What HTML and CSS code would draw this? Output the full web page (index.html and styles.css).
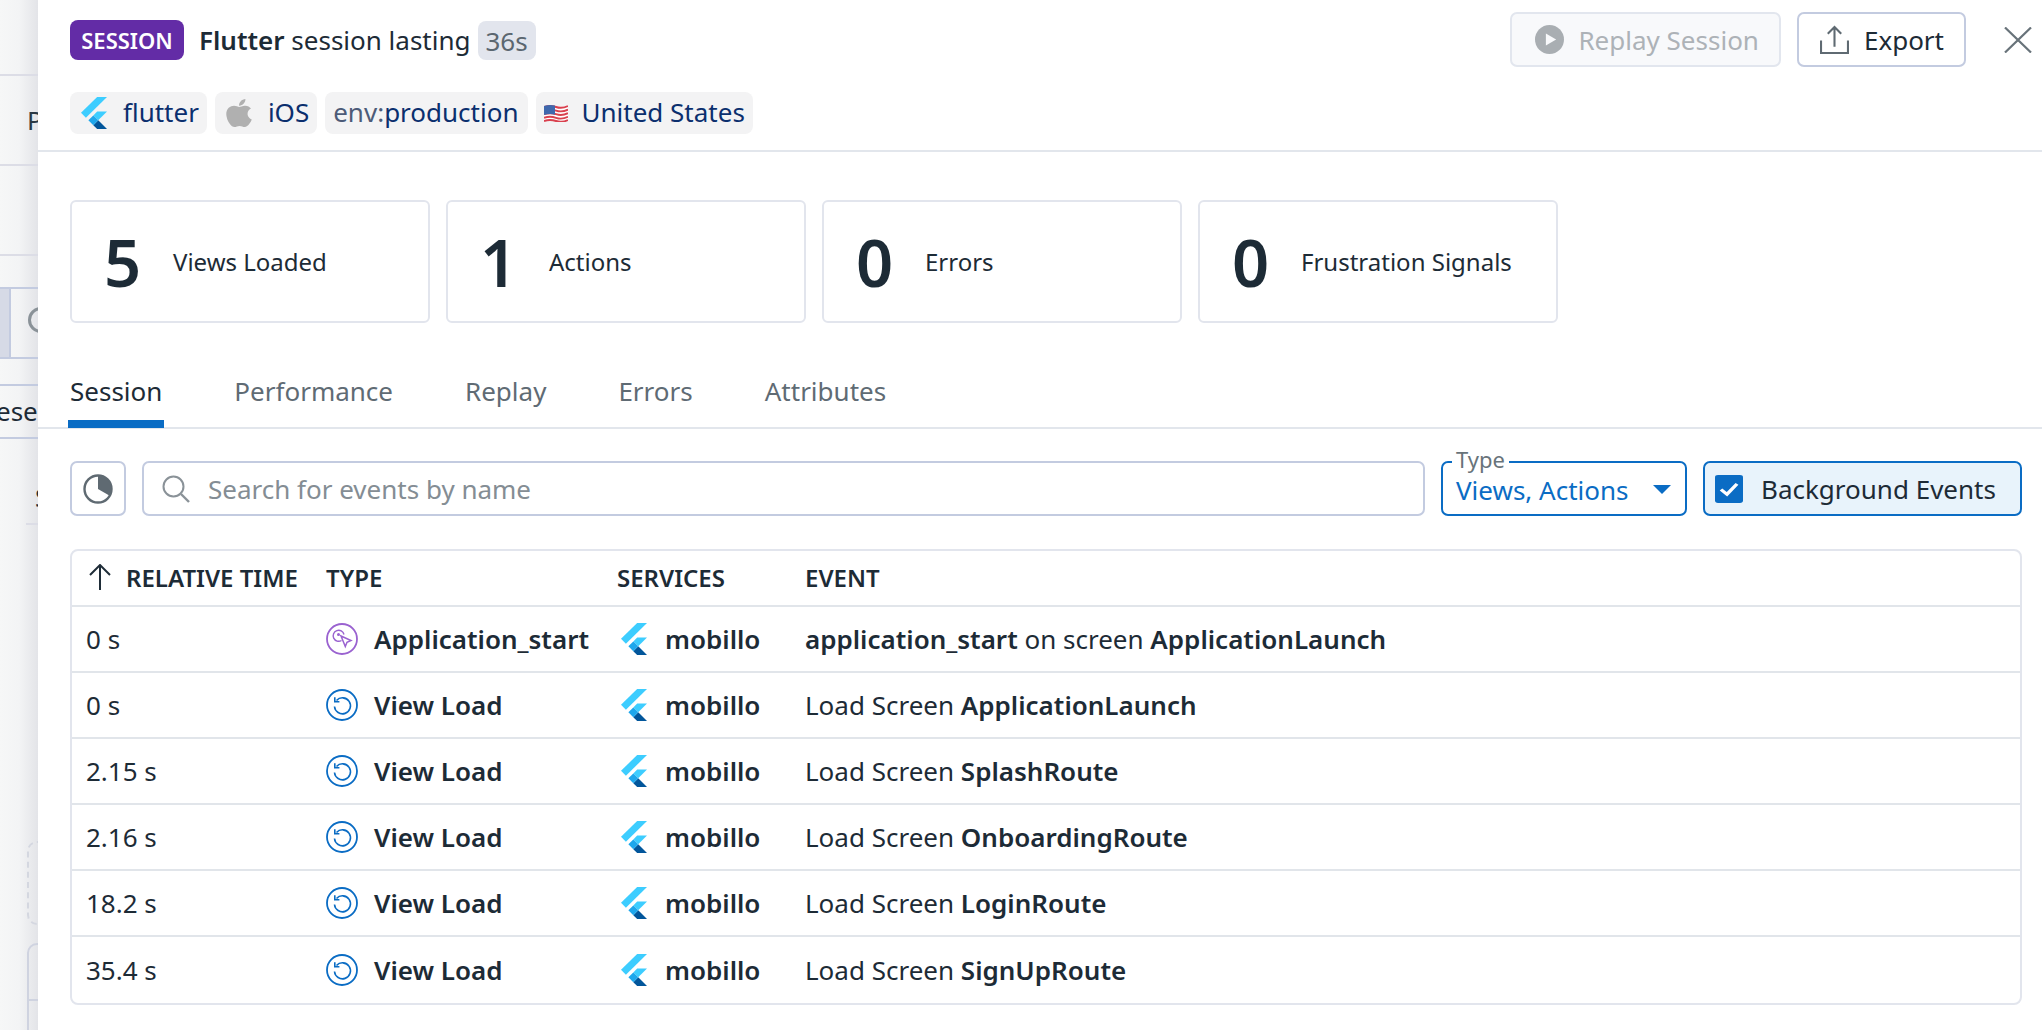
FILE: index.html
```html
<!DOCTYPE html>
<html lang="en">

<head>
    <meta charset="utf-8">
    <title>Flutter session</title>
    <link rel="stylesheet" href="styles.css">
</head>

<body>

    <svg class="defs" width="0" height="0">
        <symbol id="flutter" viewBox="0 0 148 184" preserveAspectRatio="none">
            <polygon fill="#3dcdff" points="92,0 148,0 28,119 0,91" />
            <polygon fill="#3dcdff" points="148,84 92,84 70,106 98,134" />
            <polygon fill="#02569b" points="70,162 92,184 148,184 98,134" />
            <polygon fill="#1ea7ec" points="42,134 70,106 98,134 70,162" />
        </symbol>
        <symbol id="viewload" viewBox="0 0 32 32">
            <circle cx="16" cy="16" r="15" fill="none" stroke="#0a6cc4" stroke-width="1.8" />
            <path d="M10.5 11.5a8 8 0 1 1-2 6" fill="none" stroke="#0a6cc4" stroke-width="1.6" />
            <path d="M8.8 8.2v4.6h4.6" fill="none" stroke="#0a6cc4" stroke-width="1.6" />
        </symbol>
    </svg>

    <div class="page">

        <!-- page behind the drawer -->
        <aside class="behind">
            <div class="behind-row h75"></div>
            <div class="behind-row h90 letter">P</div>
            <div class="behind-row h90"></div>
            <div class="behind-gap h31"></div>
            <div class="behind-search">
                <span class="behind-addon"></span>
                <span class="behind-circle"></span>
            </div>
            <div class="behind-gap h26"></div>
            <div class="behind-tab">ese</div>
            <div class="behind-s">S</div>
            <div class="behind-dashed"></div>
            <div class="behind-table"><div class="behind-table-head"></div></div>
        </aside>

        <main class="drawer">

            <header class="drawer-head">
                <div class="head-left">
                    <div class="title-line">
                        <span class="badge-session">SESSION</span>
                        <span class="title"><b>Flutter</b> session lasting</span>
                        <span class="duration">36s</span>
                    </div>
                    <div class="tags">
                        <span class="tag"><svg class="tag-icon"><use href="#flutter" /></svg>flutter</span>
                        <span class="tag">
                            <svg class="tag-icon" viewBox="0 0 384 512" preserveAspectRatio="none"><path fill="#b0b0b0" d="M318.7 268.7c-.2-36.7 16.4-64.4 50-84.8-18.8-26.9-47.2-41.7-84.7-44.6-35.5-2.8-74.3 20.7-88.5 20.7-15 0-49.4-19.7-76.4-19.7C63.3 141.2 4 184.8 4 273.5q0 39.3 14.4 81.2c12.8 36.7 59 126.7 107.2 125.2 25.2-.6 43-17.9 75.8-17.9 31.8 0 48.3 17.9 76.4 17.9 48.6-.7 90.4-82.5 102.6-119.3-65.2-30.7-61.7-90-61.7-91.9zm-56.6-164.2c27.3-32.4 24.8-61.9 24-72.5-24.1 1.4-52 16.4-67.9 34.9-17.5 19.8-27.8 44.3-25.6 71.9 26.1 2 49.9-11.4 69.5-34.3z" /></svg>iOS
                        </span>
                        <span class="tag tag-plain"><span class="tag-key">env:</span>production</span>
                        <span class="tag tag-flag">
                            <svg class="flag" viewBox="0 0 24 18">
                                <path fill="#fff" d="M0 2q6-2 12 0t12-1v15q-6 2-12 0t-12 1z" />
                                <path fill="none" stroke="#d9404e" stroke-width="1.9" d="M0 3q6-2 12 0t12-1M0 6.6q6-2 12 0t12-1M0 10.2q6-2 12 0t12-1M0 13.8q6-2 12 0t12-1M0 17q6-2 12 0t12-1" />
                                <path fill="#3f68ad" d="M0 2q6-2 11-.4v9.2q-5-1.6-11 .2z" />
                            </svg>United States
                        </span>
                    </div>
                </div>
                <div class="head-actions">
                    <button class="btn btn-disabled">
                        <svg class="btn-icon" viewBox="0 0 24 24"><circle cx="12" cy="12" r="12" fill="#a9aeb2" /><polygon fill="#f8f9fb" points="9,7 9,17 17.5,12" /></svg>
                        Replay Session
                    </button>
                    <button class="btn btn-export">
                        <svg class="btn-icon" viewBox="0 0 28 28"><path fill="none" stroke="#5f6a72" stroke-width="2" d="M1 15v12h26V15M14 21V2M7.5 8.5 14 2l6.500 6.500" /></svg>
                        Export
                    </button>
                    <svg class="close" viewBox="0 0 28 26"><path fill="none" stroke="#68737a" stroke-width="2.2" d="M1 0.500 27 25.500M27 0.500 1 25.500" /></svg>
                </div>
            </header>

            <section class="stats">
                <div class="stat"><span class="stat-num">5</span><span class="stat-label">Views Loaded</span></div>
                <div class="stat"><span class="stat-num">1</span><span class="stat-label">Actions</span></div>
                <div class="stat"><span class="stat-num">0</span><span class="stat-label">Errors</span></div>
                <div class="stat"><span class="stat-num">0</span><span class="stat-label">Frustration Signals</span></div>
            </section>

            <nav class="tabs">
                <span class="tab tab-active">Session</span>
                <span class="tab">Performance</span>
                <span class="tab">Replay</span>
                <span class="tab">Errors</span>
                <span class="tab">Attributes</span>
            </nav>

            <div class="toolbar">
                <div class="pie-btn">
                    <svg class="pie" viewBox="0 0 30 30">
                        <circle cx="15" cy="15" r="13.500" fill="none" stroke="#5f6a72" stroke-width="2.4" />
                        <path fill="#5f6a72" d="M15 1.500A13.500 13.500 0 0 1 26.700 21.700L15 15z" />
                    </svg>
                </div>
                <div class="search">
                    <svg class="search-icon" viewBox="0 0 28 28"><circle cx="11.500" cy="11.500" r="10" fill="none" stroke="#8a9298" stroke-width="2" /><path fill="none" stroke="#8a9298" stroke-width="2.400" d="m19 19 8 8" /></svg>
                    <span class="search-text">Search for events by name</span>
                </div>
                <div class="type-select">
                    <span class="type-label">Type</span>
                    <span class="type-value">Views, Actions</span>
                    <span class="caret"></span>
                </div>
                <div class="bg-events">
                    <svg class="check" viewBox="0 0 28 35" preserveAspectRatio="none"><rect width="28" height="35" rx="3" fill="#0a6cc4" /><path fill="none" stroke="#fff" stroke-width="3.600" d="m6 18 6 6 10-13" /></svg>
                    Background Events
                </div>
            </div>

            <section class="events">
                <div class="row row-head">
                    <div class="col-time">
                        <svg class="arrow" viewBox="0 0 24 26"><path fill="none" stroke="#1f2d38" stroke-width="2" d="M12 26V1M2 11 12 1l10 10" /></svg>
                        RELATIVE TIME
                    </div>
                    <div>TYPE</div>
                    <div>SERVICES</div>
                    <div>EVENT</div>
                </div>

                <div class="row">
                    <div class="col-plain">0 s</div>
                    <div class="col-type">
                        <svg class="type-icon" viewBox="0 0 32 32">
                            <circle cx="16" cy="16" r="15" fill="none" stroke="#9a62d0" stroke-width="1.800" />
                            <path fill="none" stroke="#9a62d0" stroke-width="1.400" d="M15.500 17.500a5.500 5.500 0 1 1 2.500-6" />
                            <circle cx="12.500" cy="11.500" r="1.500" fill="#9a62d0" />
                            <path fill="#fff" stroke="#9a62d0" stroke-width="1.500" d="m15 13 10 4.500-4 1.800-1.700 4.200z" />
                        </svg>
                        <b>Application_start</b>
                    </div>
                    <div class="col-service"><svg class="service-icon"><use href="#flutter" /></svg><b>mobillo</b></div>
                    <div><b>application_start</b> on screen <b>ApplicationLaunch</b></div>
                </div>
                <div class="row">
                    <div class="col-plain">0 s</div>
                    <div class="col-type"><svg class="type-icon"><use href="#viewload" /></svg><b>View Load</b></div>
                    <div class="col-service"><svg class="service-icon"><use href="#flutter" /></svg><b>mobillo</b></div>
                    <div>Load Screen <b>ApplicationLaunch</b></div>
                </div>
                <div class="row">
                    <div class="col-plain">2.15 s</div>
                    <div class="col-type"><svg class="type-icon"><use href="#viewload" /></svg><b>View Load</b></div>
                    <div class="col-service"><svg class="service-icon"><use href="#flutter" /></svg><b>mobillo</b></div>
                    <div>Load Screen <b>SplashRoute</b></div>
                </div>
                <div class="row">
                    <div class="col-plain">2.16 s</div>
                    <div class="col-type"><svg class="type-icon"><use href="#viewload" /></svg><b>View Load</b></div>
                    <div class="col-service"><svg class="service-icon"><use href="#flutter" /></svg><b>mobillo</b></div>
                    <div>Load Screen <b>OnboardingRoute</b></div>
                </div>
                <div class="row">
                    <div class="col-plain">18.2 s</div>
                    <div class="col-type"><svg class="type-icon"><use href="#viewload" /></svg><b>View Load</b></div>
                    <div class="col-service"><svg class="service-icon"><use href="#flutter" /></svg><b>mobillo</b></div>
                    <div>Load Screen <b>LoginRoute</b></div>
                </div>
                <div class="row row-last">
                    <div class="col-plain">35.4 s</div>
                    <div class="col-type"><svg class="type-icon"><use href="#viewload" /></svg><b>View Load</b></div>
                    <div class="col-service"><svg class="service-icon"><use href="#flutter" /></svg><b>mobillo</b></div>
                    <div>Load Screen <b>SignUpRoute</b></div>
                </div>
            </section>

        </main>
    </div>

</body>

</html>
```

FILE: styles.css
```css
html,
body {
    margin: 0px;
    padding: 0px;
    width: 100%;
    height: 100%;
    overflow: hidden;
    background-color: #FFF;
    color: #1d2b36;
    font-family: "Noto Sans", sans-serif;
    font-size: 26px;
}

b {
    font-weight: 600;
}

.defs {
    position: absolute;
}

.page {
    display: flex;
    height: 100%;
}

/* what shows of the page under the drawer */
.behind {
    width: 38px;
    flex: none;
    overflow: hidden;
    position: relative;
    background: linear-gradient(to right, #f6f7f7 0%, #f3f4f5 50%, #e3e4e8 100%);
    white-space: nowrap;
}

.behind-row {
    box-sizing: border-box;
    border-bottom: 2px solid #dcdde6;
}

.h75 {
    height: 76px;
}

.h90 {
    height: 90px;
}

.h31 {
    height: 31px;
}

.h26 {
    height: 25px;
}

.letter {
    padding-left: 27px;
    line-height: 88px;
    color: #2a3843;
}

.behind-search {
    display: flex;
    height: 72px;
    box-sizing: border-box;
    border-top: 2px solid #c3cbe0;
    border-bottom: 2px solid #c3cbe0;
}

.behind-addon {
    width: 9px;
    flex: none;
    background-color: #d6dae6;
    border-right: 2px solid #c3cbe0;
}

.behind-circle {
    box-sizing: border-box;
    width: 26px;
    height: 26px;
    margin: 18px 0px 0px 17px;
    flex: none;
    border: 3px solid #8a9298;
    border-radius: 50%;
}

.behind-tab {
    box-sizing: border-box;
    height: 55px;
    margin-left: -4px;
    width: 60px;
    border-top: 2px solid #c3cbe0;
    border-bottom: 2px solid #c3cbe0;
    line-height: 51px;
}

.behind-s {
    box-sizing: border-box;
    height: 86px;
    margin-left: 26px;
    padding: 41px 0px 0px 9px;
    border-bottom: 2px solid #dcdde6;
    line-height: 34px;
}

.behind-dashed {
    box-sizing: border-box;
    height: 84px;
    width: 40px;
    margin: 316px 0px 0px 27px;
    border: 2px dashed #d4d7e0;
    border-radius: 10px;
}

.behind-table {
    box-sizing: border-box;
    height: 100px;
    width: 40px;
    margin: 18px 0px 0px 27px;
    border: 2px solid #cfd3e0;
    border-radius: 10px 0px 0px 0px;
}

.behind-table-head {
    height: 54px;
    border-bottom: 2px solid #cfd3e0;
}

/* drawer */
.drawer {
    flex: 1;
    min-width: 0;
    background-color: #FFF;
}

.drawer-head {
    box-sizing: border-box;
    height: 152px;
    display: flex;
    justify-content: space-between;
    padding: 0px 10px 0px 32px;
    border-bottom: 2px solid #e2e6ec;
}

.head-left {
    padding-top: 20px;
}

.title-line {
    display: flex;
    align-items: center;
    height: 40px;
    line-height: 40px;
}

.badge-session {
    box-sizing: border-box;
    width: 114px;
    height: 40px;
    border-radius: 8px;
    background-color: #632ca6;
    color: #FFF;
    font-size: 22px;
    font-weight: 600;
    text-align: center;
}

.title {
    margin-left: 15px;
}

.duration {
    margin-left: 7px;
    width: 58px;
    height: 39px;
    border-radius: 8px;
    background-color: #e2e5ed;
    color: #5b6770;
    text-align: center;
}

.tags {
    display: flex;
    gap: 8px;
    margin-top: 32px;
}

.tag {
    box-sizing: border-box;
    height: 42px;
    display: flex;
    align-items: center;
    padding: 0px 8px 2px 11px;
    border-radius: 8px;
    background-color: #f3f3f4;
    color: #0b2f6e;
    line-height: 40px;
}

.tag-icon {
    width: 26px;
    height: 32px;
    margin: 2px 16px 0px 0px;
}

.tag-plain {
    padding-left: 8px;
    padding-right: 9px;
}

.tag-key {
    color: #4c5b78;
}

.tag-flag {
    padding-left: 8px;
}

.flag {
    width: 24px;
    height: 18px;
    margin: 2px 14px 0px 0px;
}

.head-actions {
    display: flex;
    align-items: flex-start;
    padding-top: 12px;
}

.btn {
    box-sizing: border-box;
    height: 55px;
    display: flex;
    align-items: center;
    padding: 0px 20px 0px 23px;
    margin-right: 16px;
    border: 2px solid #c3cbe0;
    border-radius: 7px;
    background-color: #FFF;
    color: #1d2b36;
    font-family: inherit;
    font-size: 26px;
}

.btn-disabled {
    border-color: #e2e6ee;
    background-color: #f8f9fb;
    color: #adb2b7;
}

.btn-export {
    padding-left: 21px;
}

.btn-icon {
    width: 29px;
    height: 29px;
    margin-right: 14px;
}

.btn-export .btn-icon {
    margin-right: 15px;
}

.close {
    width: 28px;
    height: 26px;
    margin: 15px 0px 0px 22px;
}

.stats {
    display: flex;
    gap: 16px;
    padding: 48px 0px 0px 32px;
}

.stat {
    box-sizing: border-box;
    width: 360px;
    height: 123px;
    display: flex;
    align-items: center;
    padding-left: 32px;
    border: 2px solid #e2e5ed;
    border-radius: 6px;
}

.stat-num {
    width: 69px;
    font-size: 65px;
    font-weight: 600;
}

.stat-label {
    font-size: 24px;
}

.tabs {
    display: flex;
    gap: 72px;
    height: 106px;
    box-sizing: border-box;
    padding-left: 32px;
    border-bottom: 2px solid #e2e6ec;
}

.tab {
    box-sizing: border-box;
    height: 105px;
    padding-top: 49px;
    color: #5f6b74;
    line-height: 38px;
}

.tab-active {
    margin: 0px -2px;
    padding-left: 2px;
    padding-right: 2px;
    color: #1d2b36;
    border-bottom: 8px solid #0a6cc4;
}

.toolbar {
    display: flex;
    gap: 16px;
    padding: 32px 20px 0px 32px;
    height: 55px;
}

.pie-btn {
    box-sizing: border-box;
    width: 56px;
    display: flex;
    align-items: center;
    justify-content: center;
    border: 2px solid #c3cbe0;
    border-radius: 7px;
}

.pie {
    width: 30px;
    height: 30px;
}

.search {
    flex: 1;
    display: flex;
    align-items: center;
    padding-left: 18px;
    border: 2px solid #c3cbe0;
    border-radius: 7px;
}

.search-icon {
    width: 28px;
    height: 28px;
    margin-right: 18px;
}

.search-text {
    color: #848d94;
}

.type-select {
    position: relative;
    box-sizing: border-box;
    width: 246px;
    display: flex;
    align-items: center;
    justify-content: space-between;
    padding: 2px 14px 0px 13px;
    border: 2px solid #0a6cc4;
    border-radius: 7px;
    color: #0a6cc4;
}

.type-label {
    position: absolute;
    top: -14px;
    left: 9px;
    padding: 0px 4px;
    background-color: #FFF;
    color: #68737a;
    font-size: 22px;
    line-height: 20px;
}

.caret {
    width: 0;
    height: 0;
    border-left: 9px solid transparent;
    border-right: 9px solid transparent;
    border-top: 9px solid #0a6cc4;
}

.bg-events {
    box-sizing: border-box;
    width: 319px;
    display: flex;
    align-items: center;
    padding-left: 10px;
    border: 2px solid #0a6cc4;
    border-radius: 7px;
    background-color: #e8f3fb;
}

.check {
    width: 28px;
    height: 28px;
    margin-right: 18px;
}

.events {
    box-sizing: border-box;
    margin: 33px 20px 0px 32px;
    border: 2px solid #e2e5ed;
    border-radius: 8px;
}

.row {
    box-sizing: border-box;
    height: 66px;
    display: grid;
    grid-template-columns: 254px 291px 188px 1fr;
    align-items: center;
    border-bottom: 2px solid #e1e5ea;
}

.row-head {
    height: 56px;
    padding-bottom: 2px;
    font-size: 24px;
    font-weight: 600;
}

.row-last {
    height: 66px;
    border-bottom: 0px;
}

.col-time {
    display: flex;
    align-items: center;
    padding-left: 16px;
}

.arrow {
    width: 24px;
    height: 26px;
    margin-right: 14px;
}

.col-plain {
    padding-left: 14px;
}

.col-type,
.col-service {
    display: flex;
    align-items: center;
}

.type-icon {
    width: 32px;
    height: 32px;
    margin-right: 16px;
}

.service-icon {
    width: 26px;
    height: 32px;
    margin: 0px 18px 0px 4px;
}
```
